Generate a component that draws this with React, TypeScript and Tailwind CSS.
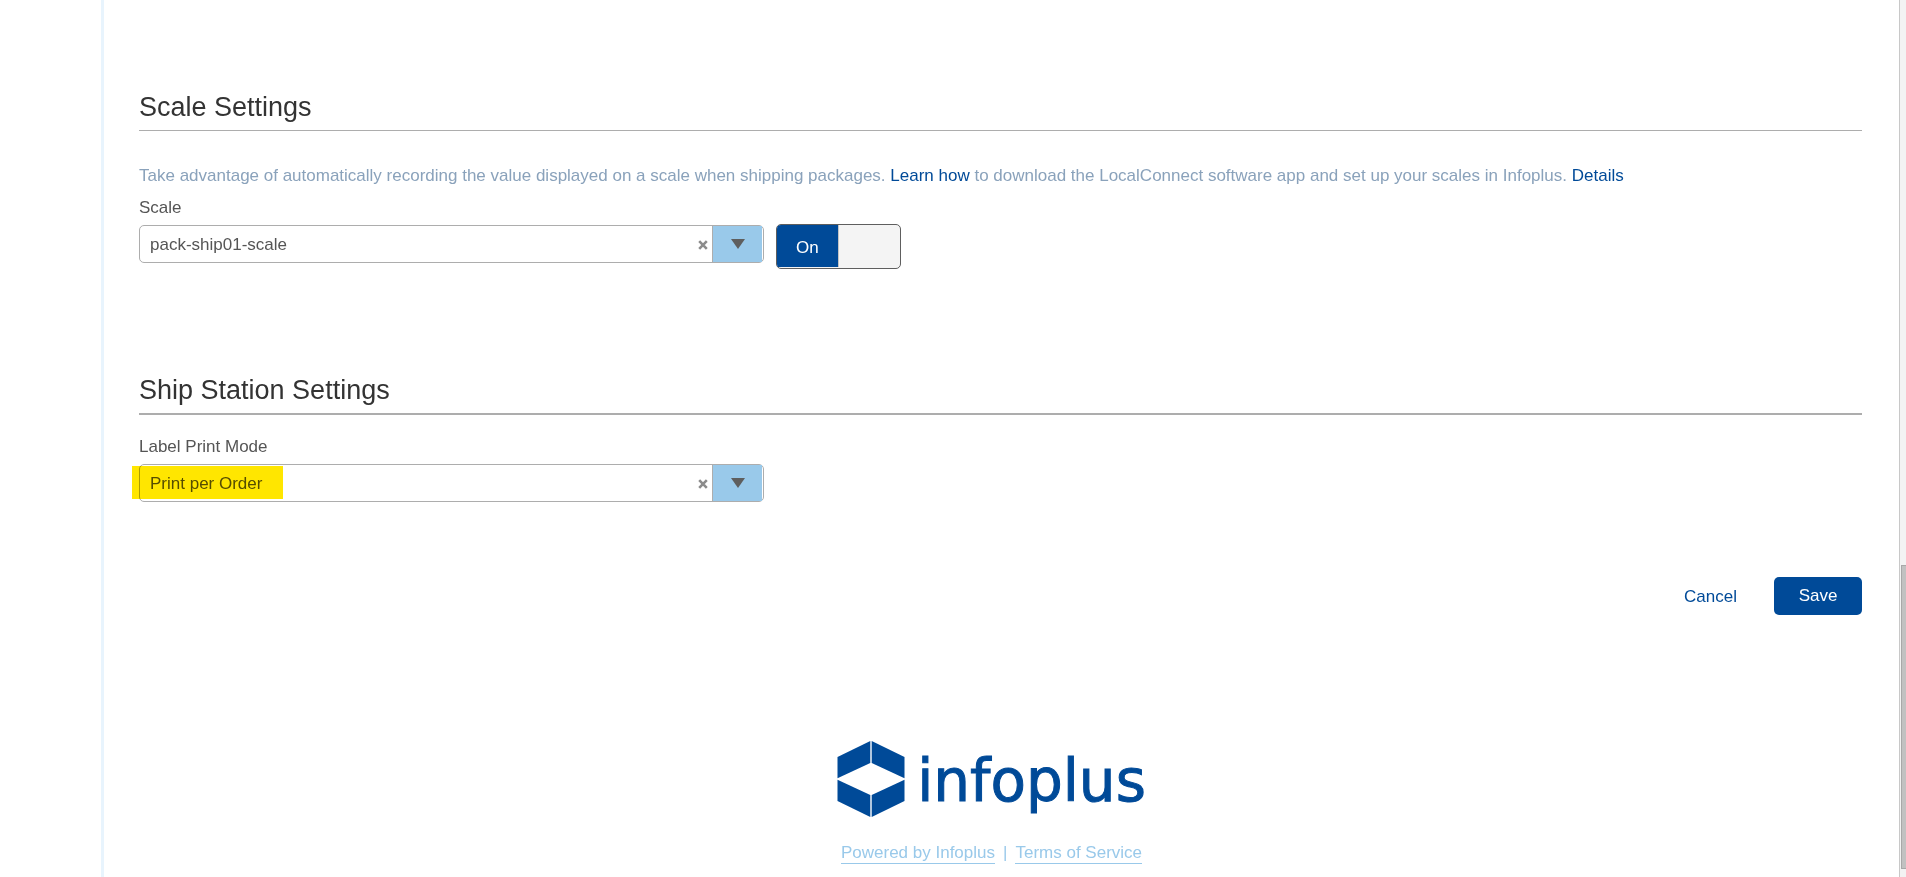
import { useState } from "react";

interface SelectFieldProps {
  id: string;
  label: string;
  options: string[];
  highlighted?: boolean;
}

function SelectField({ id, label, options, highlighted }: SelectFieldProps) {
  const [value, setValue] = useState(options[0]);

  return (
    <div className="w-[625px] max-w-full">
      <label htmlFor={id} className="block leading-6">
        {label}
      </label>
      <div className="relative mt-[5px] flex h-[38px] rounded-[5px] border border-[#adadad] bg-white">
        <select
          id={id}
          value={value}
          onChange={(e) => setValue(e.target.value)}
          className="min-w-0 flex-1 appearance-none bg-transparent pl-[10px] pt-[2px] outline-none"
        >
          <option value="" />
          {options.map((o) => (
            <option key={o}>{o}</option>
          ))}
        </select>
        <button type="button" aria-label={`Clear ${label}`} onClick={() => setValue("")} className="px-1 pt-[2px]">
          <svg width="10" height="10" viewBox="0 0 10 10" stroke="#8c8c8c" strokeWidth="2.6">
            <path d="M1.2 1.2l7.6 7.6M8.8 1.2l-7.6 7.6" />
          </svg>
        </button>
        <span className="pointer-events-none mr-px flex w-[50px] items-center justify-center border-l border-[#adadad] bg-[#99c9ea]">
          <svg width="14" height="10" viewBox="0 0 14 10" fill="#5e5e5e">
            <path d="M0 0h14L7 10z" />
          </svg>
        </span>
        {highlighted && (
          <span className="pointer-events-none absolute -left-2 top-px h-[33px] w-[151px] bg-[#ffe600] mix-blend-multiply" />
        )}
      </div>
    </div>
  );
}

function Toggle() {
  const [on, setOn] = useState(true);

  return (
    <label className="flex h-[45px] w-[125px] cursor-pointer overflow-hidden rounded-[5px] border border-[#5e5e5e] bg-[#f4f4f4] pb-px">
      <input
        type="checkbox"
        checked={on}
        onChange={(e) => setOn(e.target.checked)}
        aria-label="Use scale"
        className="sr-only"
      />
      <span
        className={
          on
            ? "flex w-1/2 items-center justify-center border-r border-[#c4c4c4] bg-[#004a98] pt-1 text-white"
            : "ml-auto flex w-1/2 items-center justify-center border-l border-[#c4c4c4] bg-white pt-1"
        }
      >
        {on ? "On" : "Off"}
      </span>
    </label>
  );
}

function Logo() {
  return (
    <div className="flex items-center gap-3 text-[#004a98]">
      <svg width="68" height="76" viewBox="0 0 68 76" fill="currentColor" aria-hidden="true">
        <path d="M33.3 0v22L0.5 37.3V16z" />
        <path d="M34.7 0v22L67.5 37.3V16z" />
        <path d="M33.3 76V54L0.5 38.7V60z" />
        <path d="M34.7 76V54L67.5 38.7V60z" />
      </svg>
      <span className="pt-1 font-['DejaVu_Sans',sans-serif] text-[58px] leading-[72px] [-webkit-text-stroke:1px_#004a98]">
        infoplus
      </span>
    </div>
  );
}

// The thumb keeps its proportions whatever the page height is.
function ScrollRail() {
  return (
    <div aria-hidden="true" className="flex w-[7px] shrink-0 flex-col border-l border-[#c8c8c8] bg-[#f3f3f3] pl-px">
      <div className="flex-[566]" />
      <div className="flex-[303] border-l border-y border-[#a8a8a8] bg-[#c1c1c1]" />
      <div className="flex-[8]" />
    </div>
  );
}

export default function App() {
  return (
    <div className="flex min-h-screen bg-white font-['Liberation_Sans',Arial,sans-serif] text-[17px] text-[#555]">
      <div className="w-[101px] shrink-0" />
      <main className="min-w-0 flex-1 border-l-[3px] border-[#e8f4fd] pl-[35px] pr-[37px]">
        <section className="pt-[89px]">
          <h2 className="border-b border-[#adadad] pb-[5px] text-[27px] leading-9 text-[#333]">Scale Settings</h2>
          <p className="mt-[33px] leading-6 text-[#8aa2bb]">
            Take advantage of automatically recording the value displayed on a scale when shipping packages.{" "}
            <a href="#learn" className="text-[#004a98]">
              Learn how
            </a>{" "}
            to download the LocalConnect software app and set up your scales in Infoplus.{" "}
            <a href="#details" className="text-[#004a98]">
              Details
            </a>
          </p>
          <div className="mt-2 flex items-end gap-3">
            <div className="min-w-0 pb-[6px]">
              <SelectField id="scale" label="Scale" options={["pack-ship01-scale"]} />
            </div>
            <Toggle />
          </div>
        </section>

        <section className="pt-[103px]">
          <h2 className="mb-5 border-b-2 border-[#adadad] pb-[5px] text-[27px] leading-9 text-[#333]">
            Ship Station Settings
          </h2>
          <SelectField id="print-mode" label="Label Print Mode" options={["Print per Order"]} highlighted />
        </section>

        <div className="mt-[75px] flex items-center justify-end gap-[37px]">
          <button type="button" className="pt-[2px] text-[#004a98]">
            Cancel
          </button>
          <button type="button" className="h-[38px] w-[88px] rounded-[5px] bg-[#004a98] text-white">
            Save
          </button>
        </div>

        <footer className="mt-[126px] flex flex-col items-center pr-[18px]">
          <Logo />
          <div className="mt-[26px] flex gap-2 text-[#99c9ea]">
            <a href="#infoplus" className="border-b border-[#99c9ea] leading-5">
              Powered by Infoplus
            </a>
            <span className="leading-5">|</span>
            <a href="#terms" className="border-b border-[#99c9ea] leading-5">
              Terms of Service
            </a>
          </div>
        </footer>
      </main>
      <ScrollRail />
    </div>
  );
}
